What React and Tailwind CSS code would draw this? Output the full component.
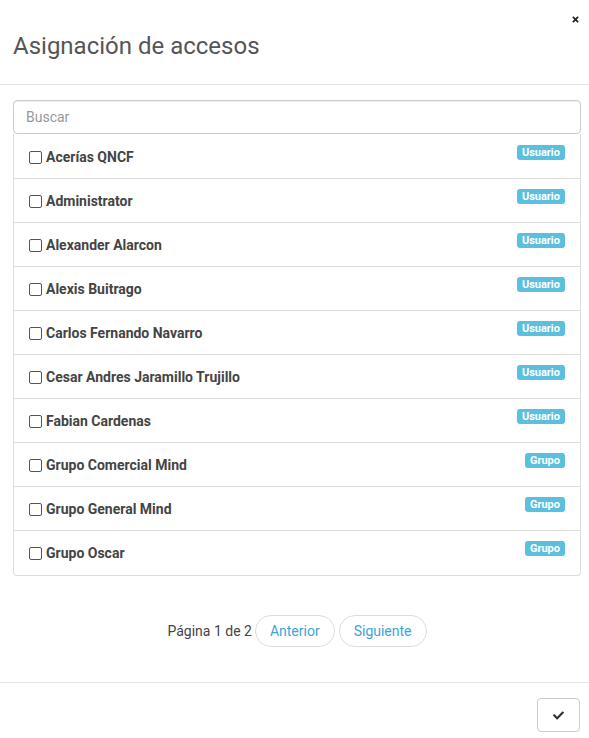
import React from "react";
import { FaTimes, FaCheck } from "react-icons/fa";

const items = [
  ["Acerías QNCF", "Usuario"],
  ["Administrator", "Usuario"],
  ["Alexander Alarcon", "Usuario"],
  ["Alexis Buitrago", "Usuario"],
  ["Carlos Fernando Navarro", "Usuario"],
  ["Cesar Andres Jaramillo Trujillo", "Usuario"],
  ["Fabian Cardenas", "Usuario"],
  ["Grupo Comercial Mind", "Grupo"],
  ["Grupo General Mind", "Grupo"],
  ["Grupo Oscar", "Grupo"],
];

export default function App() {
  return (
    <div className="w-[589px] h-[738px] bg-white relative" style={{ fontFamily: "Roboto, 'Liberation Sans', sans-serif" }}>
      <button className="absolute right-[9px] top-[15px] text-[#222]">
        <FaTimes size={9} />
      </button>
      <div className="h-[85px] border-b border-[#e5e5e5] px-[13px] pt-[31px]">
        <h1 className="text-[24px] leading-[30px] text-[#555] font-normal">Asignación de accesos</h1>
      </div>
      <div className="pl-[13px] pr-[8px] pt-[15px]">
        <div className="h-[34px] border border-[#ccc] rounded-[4px] flex items-center px-[12px] text-[14px] text-[#999] shadow-[inset_0_1px_1px_rgba(0,0,0,0.075)]">
          Buscar
        </div>
        <div className="border border-t-0 border-[#ddd] rounded-b-[4px]">
          {items.map(([name, type], i) => (
            <div
              key={name}
              className={`flex items-start justify-between pl-[15px] pr-[15px] ${i === 0 ? "h-[45px]" : "h-[44px]"} ${i < items.length - 1 ? "border-b border-[#ddd]" : ""}`}
            >
              <label className={`flex items-center gap-[4px] text-[14px] leading-[18px] font-bold text-[#444] ${i === 0 ? "pt-[14px]" : "pt-[13px]"}`}>
                <span className="w-[13px] h-[13px] border border-[#555] rounded-[2px] bg-white inline-block" />
                {name}
              </label>
              <span className={`bg-[#5bc0de] text-white text-[11px] font-bold leading-[15px] px-[5px] rounded-[3px] ${i === 0 ? "mt-[11px]" : "mt-[10px]"}`}>
                {type}
              </span>
            </div>
          ))}
        </div>
        <div className="flex items-center justify-center mt-[39px] text-[14px]">
          <span className="text-[#444] mr-[3px]">Página 1 de 2</span>
          <button className="h-[32px] px-[14px] rounded-full border border-[#ddd] text-[#3aa6d8] mr-[4px]">Anterior</button>
          <button className="h-[32px] px-[14px] rounded-full border border-[#ddd] text-[#3aa6d8]">Siguiente</button>
        </div>
      </div>
      <div className="absolute left-0 right-0 top-[682px] border-t border-[#e5e5e5] flex justify-end px-[9px] pt-[15px]">
        <button className="w-[43px] h-[34px] border border-[#ccc] rounded-[4px] flex items-center justify-center text-[#333]">
          <FaCheck size={11} />
        </button>
      </div>
    </div>
  );
}
